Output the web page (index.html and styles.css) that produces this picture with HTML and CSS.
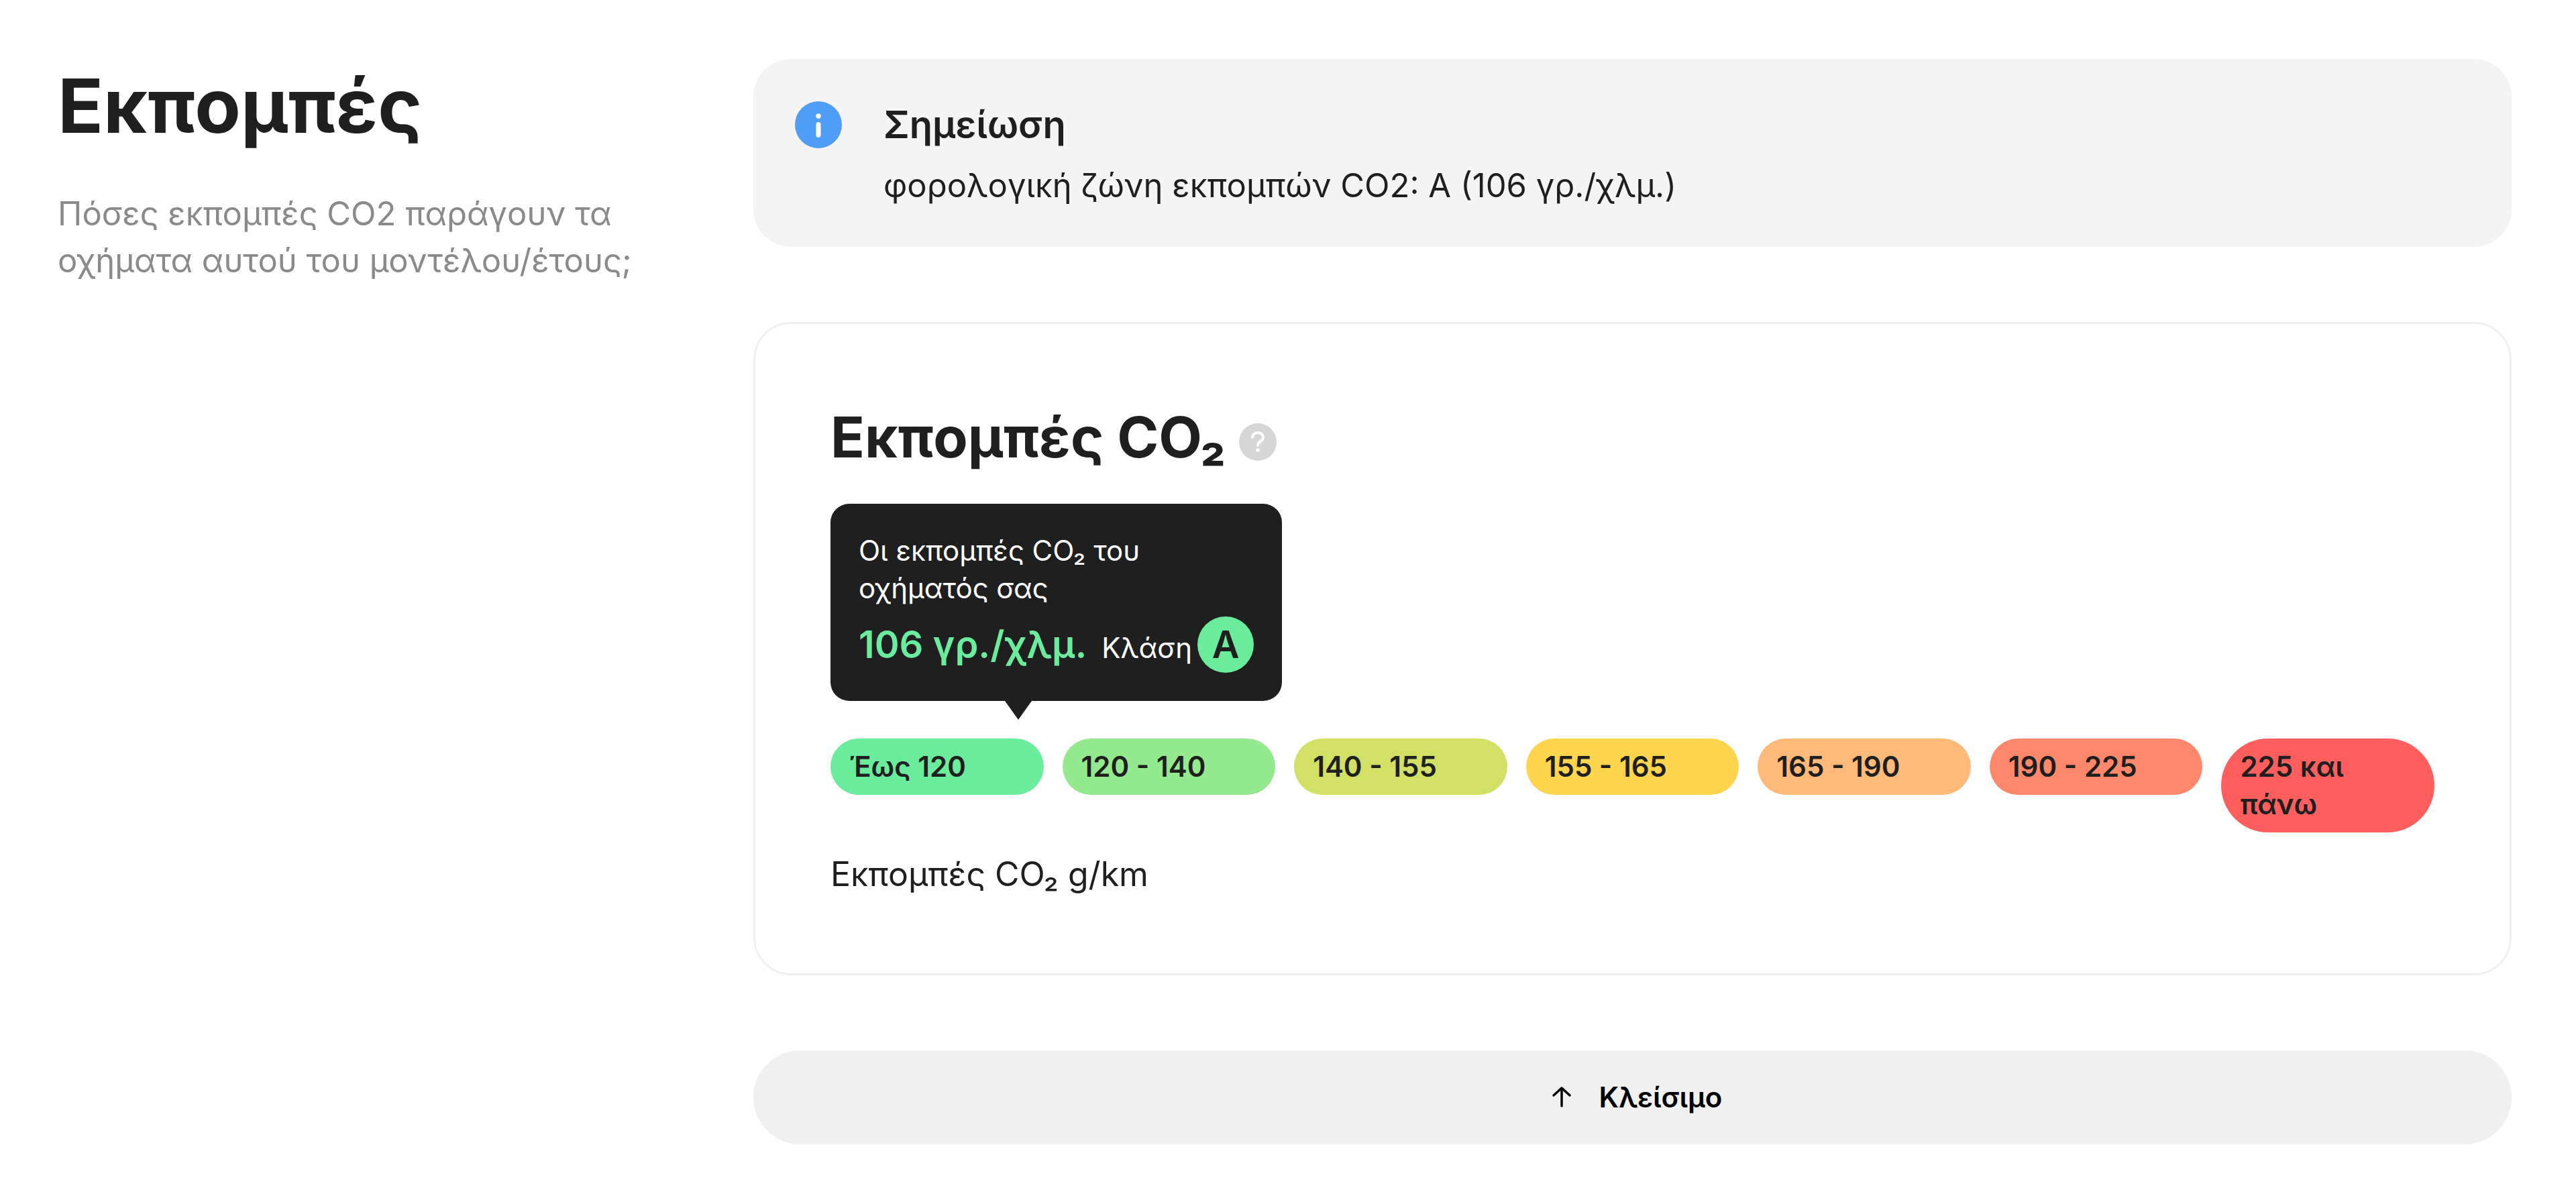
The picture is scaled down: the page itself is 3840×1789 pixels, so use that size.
FILE: index.html
```html
<!DOCTYPE html>
<html lang="el">
<head>
  <meta charset="UTF-8">
  <title>Εκπομπές</title>
  <link rel="stylesheet" href="styles.css">
</head>
<body>
  <section class="emissions">
    <header class="intro">
      <h1>Εκπομπές</h1>
      <p>Πόσες εκπομπές CO2 παράγουν τα οχήματα αυτού του μοντέλου/έτους;</p>
    </header>

    <div class="content">
      <div class="note">
        <svg class="note-icon" viewBox="0 0 70 70" aria-hidden="true">
          <circle cx="35" cy="35" r="35" fill="#4f9df7"/>
          <circle cx="35" cy="22" r="3.7" fill="#fff"/>
          <path d="M35 34.5v16" stroke="#fff" stroke-width="7" stroke-linecap="round"/>
        </svg>
        <div>
          <h2>Σημείωση</h2>
          <p>φορολογική ζώνη εκπομπών CO2: A (106 γρ./χλμ.)</p>
        </div>
      </div>

      <div class="card">
        <div class="card-title">
          <h2>Εκπομπές CO₂</h2>
          <button class="help" type="button" aria-label="Εκπομπές CO₂">
            <svg viewBox="0 0 56 56" aria-hidden="true">
              <circle cx="28" cy="28" r="28" fill="#d6d6d6"/>
              <path d="M20 21c0-4 3.5-7 8-7s8 3 8 7.5c0 5.5-8 5-8 11.5" fill="none" stroke="#fff" stroke-width="4" stroke-linecap="round"/>
              <circle cx="28" cy="40" r="2.8" fill="#fff"/>
            </svg>
          </button>
        </div>

        <div class="tooltip">
          <p>Οι εκπομπές CO₂ του οχήματός σας</p>
          <div class="result">
            <strong>106 γρ./χλμ.</strong>
            <span>Κλάση</span>
            <b class="grade">A</b>
          </div>
        </div>

        <ul class="scale">
          <li class="a">Έως 120</li>
          <li class="b">120 - 140</li>
          <li class="c">140 - 155</li>
          <li class="d">155 - 165</li>
          <li class="e">165 - 190</li>
          <li class="f">190 - 225</li>
          <li class="g">225 και πάνω</li>
        </ul>
        <p class="unit">Εκπομπές CO₂ g/km</p>
      </div>

      <button class="close" type="button">
        <svg viewBox="0 0 56 56" aria-hidden="true">
          <path d="M28 41V14M16 25l12-11 12 11" fill="none" stroke="#000" stroke-width="3.5" stroke-linecap="round" stroke-linejoin="round"/>
        </svg>
        Κλείσιμο
      </button>
    </div>
  </section>
</body>
</html>
```
FILE: styles.css
```css
* {
  box-sizing: border-box;
}
body {
  margin: 0;
  font-family: Inter, "Liberation Sans", sans-serif;
  font-size: 49px;
  line-height: 70px;
  color: #1f1f1f;
  background: #fff;
}
h1, h2, p, ul {
  margin: 0;
  padding: 0;
}
button {
  font-family: inherit;
  border: none;
  cursor: pointer;
}
.emissions {
  display: grid;
  grid-template-columns: 925px 1fr;
  gap: 112px;
  padding: 88px 96px 84px 86px;
}
.intro h1 {
  font-size: 112px;
  line-height: 138px;
  font-weight: 700;
  margin-bottom: 58px;
}
.intro p {
  color: #8a8a8a;
}
.content {
  display: flex;
  flex-direction: column;
  gap: 112px;
}
.note {
  display: flex;
  gap: 62px;
  padding: 56px 62px;
  background: #f4f4f4;
  border-radius: 56px;
}
.note-icon {
  flex: none;
  width: 70px;
  height: 70px;
  margin-top: 7px;
}
.note h2 {
  font-size: 56px;
  line-height: 84px;
  font-weight: 600;
  margin-bottom: 14px;
}
.card {
  padding: 112px;
  border: 3px solid #f0f0f0;
  border-radius: 56px;
}
.card-title {
  display: flex;
  align-items: center;
  gap: 20px;
  margin-bottom: 42px;
}
.card-title h2 {
  font-size: 84px;
  line-height: 114px;
  font-weight: 700;
}
.help {
  width: 56px;
  height: 56px;
  margin-top: 14px;
  padding: 0;
  background: none;
}
.help svg {
  display: block;
}
.tooltip {
  position: relative;
  width: min-content;
  padding: 42px;
  margin-bottom: 56px;
  font-size: 42px;
  line-height: 56px;
  color: #fff;
  background: #1f1f1f;
  border-radius: 28px;
}
.tooltip::after {
  content: "";
  position: absolute;
  top: 100%;
  left: 260px;
  border: 20px solid transparent;
  border-top: 28px solid #1f1f1f;
  border-bottom: 0;
}
.result {
  display: flex;
  align-items: baseline;
  margin-top: 14px;
  white-space: nowrap;
}
.result strong {
  margin-right: 22px;
  font-size: 56px;
  font-weight: 600;
  color: #6beb9c;
}
.grade {
  width: 84px;
  height: 84px;
  margin-left: 8px;
  font-size: 56px;
  line-height: 84px;
  font-weight: 600;
  text-align: center;
  color: #1f1f1f;
  background: #6beb9c;
  border-radius: 50%;
}
.scale {
  display: grid;
  grid-template-columns: repeat(7, 1fr);
  align-items: start;
  gap: 28px;
  margin-bottom: 26px;
  list-style: none;
  font-size: 42px;
  line-height: 56px;
  font-weight: 600;
}
.scale li {
  padding: 14px 28px;
  border-radius: 70px;
}
.a { background: #6beb9c; }
.b { background: #94e98f; }
.c { background: #d2e065; }
.d { background: #ffd54d; }
.e { background: #ffb978; }
.f { background: #ff876c; }
.g { background: #ff5e5e; }
.unit {
  font-size: 50px;
  line-height: 72px;
}
.close {
  display: flex;
  align-items: center;
  justify-content: center;
  gap: 28px;
  padding: 42px;
  font-size: 42px;
  line-height: 56px;
  font-weight: 600;
  color: #000;
  background: #f0f0f0;
  border-radius: 70px;
}
.close svg {
  width: 56px;
  height: 56px;
}
```
